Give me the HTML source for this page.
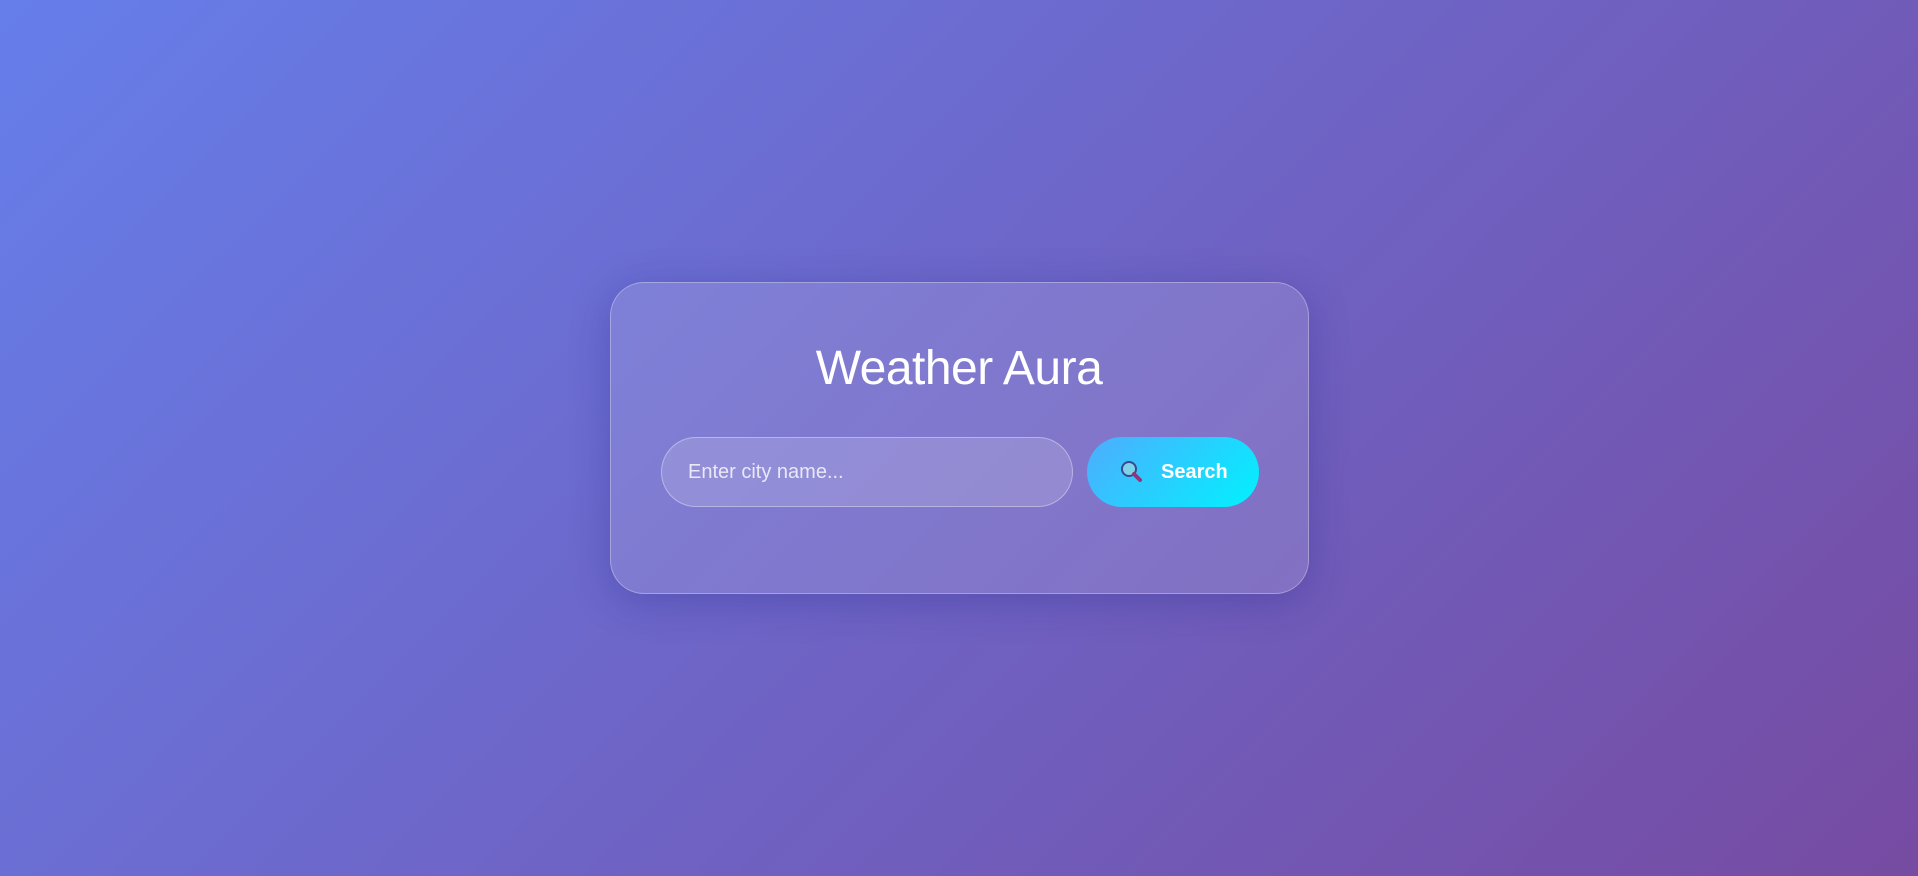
<!DOCTYPE html>
<html><head><style>
html,body{margin:0;width:1918px;height:876px;overflow:hidden}
body{background:linear-gradient(135deg,#667eea 0%,#764ba2 100%);font-family:"Liberation Sans",sans-serif;position:relative}
.card{position:absolute;left:610px;top:282px;width:697px;height:310px;border-radius:34px;background:rgba(255,255,255,0.13);border:1px solid rgba(255,255,255,0.3);box-shadow:0 8px 40px rgba(31,38,135,0.3)}
h1{position:absolute;left:0;right:0;top:341px;margin:0;text-align:center;color:#fff;font-weight:normal;font-size:48px;letter-spacing:-0.5px;line-height:56px}
.input{position:absolute;left:661px;top:437px;height:68px;border-radius:36px;background:rgba(255,255,255,0.15);border:1px solid rgba(255,255,255,0.35);color:rgba(255,255,255,0.8);font-size:20px;line-height:68px;padding-left:26px;box-sizing:content-box;width:384px}
.btn{position:absolute;left:1087px;top:437px;width:172px;height:70px;border-radius:36px;background:linear-gradient(135deg,#4facfe,#00f2fe);color:#fff;font-weight:bold;font-size:20px;line-height:70px}
.btn span{position:absolute;left:74px}
.btn svg{position:absolute;left:33px;top:23px}
</style></head><body>
<div class="card"></div>
<h1>Weather Aura</h1>
<div class="input">Enter city name...</div>
<div class="btn"><svg width="24" height="24" viewBox="0 0 24 24"><circle cx="9" cy="9" r="7" fill="#7fd3e8" stroke="#3a4a8a" stroke-width="2"/><line x1="14" y1="14" x2="20" y2="20" stroke="#8a3a7a" stroke-width="4" stroke-linecap="round"/></svg><span>Search</span></div>
</body></html>
